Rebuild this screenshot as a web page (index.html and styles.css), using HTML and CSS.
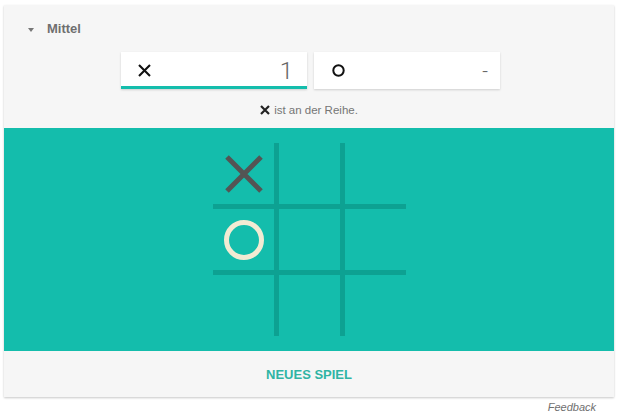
FILE: index.html
```html
<!DOCTYPE html>
<html lang="de">
<head>
<meta charset="utf-8">
<title>Tic Tac Toe</title>
<link rel="stylesheet" href="styles.css">
</head>
<body>
<div class="card">
  <div class="header">
    <span class="caret"></span>
    <span class="level">Mittel</span>
  </div>
  <div class="scores">
    <div class="score active">
      <svg class="mark-sm" width="13" height="13" viewBox="0 0 13 13"><path d="M1 1L12 12M12 1L1 12" stroke="#111" stroke-width="2.1" fill="none"/></svg>
      <span class="value">1</span>
    </div>
    <div class="score">
      <svg class="mark-sm" width="13" height="13" viewBox="0 0 13 13"><circle cx="6.5" cy="6.5" r="5.2" stroke="#111" stroke-width="2" fill="none"/></svg>
      <span class="value dash">-</span>
    </div>
  </div>
  <div class="status">
    <svg width="10" height="10" viewBox="0 0 10 10"><path d="M1 1L9 9M9 1L1 9" stroke="#222" stroke-width="2.2" fill="none"/></svg>
    <span>ist an der Reihe.</span>
  </div>
  <div class="board">
    <div class="grid">
      <div class="cell">
        <svg width="40" height="40" viewBox="0 0 40 40"><path d="M3 3L37 37M37 3L3 37" stroke="#545454" stroke-width="5" fill="none"/></svg>
      </div>
      <div class="cell"></div>
      <div class="cell"></div>
      <div class="cell">
        <svg width="42" height="42" viewBox="0 0 42 42"><circle cx="21" cy="21" r="17.5" stroke="#f2ebd3" stroke-width="5" fill="none"/></svg>
      </div>
      <div class="cell"></div>
      <div class="cell"></div>
      <div class="cell"></div>
      <div class="cell"></div>
      <div class="cell"></div>
    </div>
  </div>
  <div class="footer">
    <span class="new-game">NEUES SPIEL</span>
  </div>
</div>
<div class="feedback">Feedback</div>
</body>
</html>
```
FILE: styles.css
```css
html, body {
  margin: 0;
  padding: 0;
  background: #ffffff;
  font-family: "Liberation Sans", Arial, sans-serif;
}

.card {
  margin: 5px 6px 0 4px;
  width: 610px;
  background: #f6f6f6;
  box-shadow: 0 1px 2px rgba(0, 0, 0, 0.22);
}

.header {
  display: flex;
  align-items: center;
  padding: 16px 0 0 24px;
  height: 16px;
}

.caret {
  width: 0;
  height: 0;
  border-left: 3.5px solid transparent;
  border-right: 3.5px solid transparent;
  border-top: 4px solid #777;
  margin-right: 13px;
  margin-top: 1px;
}

.level {
  font-size: 13px;
  font-weight: bold;
  color: #6f6f6f;
  line-height: 16px;
}

.scores {
  display: flex;
  justify-content: center;
  gap: 7px;
  margin-top: 15px;
  padding-left: 3px;
}

.score {
  width: 186px;
  height: 37px;
  box-sizing: border-box;
  background: #ffffff;
  display: flex;
  align-items: center;
  justify-content: space-between;
  padding: 0 14px 0 17px;
  box-shadow: 0 1px 2px rgba(0, 0, 0, 0.16);
}

.score.active {
  border-bottom: 3px solid #14bdac;
  padding-top: 3px;
}

.score:not(.active) {
  padding-left: 18px;
  padding-right: 12px;
}

.value {
  font-family: Roboto, "Liberation Sans", sans-serif;
  font-weight: 300;
  font-size: 24px;
  color: #666666;
  line-height: 28px;
}

.value.dash {
  font-size: 20px;
}

.status {
  display: flex;
  justify-content: center;
  align-items: center;
  gap: 4px;
  margin-top: 13px;
  height: 16px;
  font-size: 11.5px;
  color: #757575;
  margin-bottom: 10px;
}

.board {
  background: #14bdac;
  height: 223px;
  box-sizing: border-box;
  padding-top: 15px;
  display: flex;
  justify-content: center;
  align-items: flex-start;
}

.grid {
  display: grid;
  grid-template-columns: repeat(3, 61px);
  grid-template-rows: repeat(3, 61px);
  gap: 5px;
  background: #0da192;
  margin-left: 1px;
}

.cell {
  background: #14bdac;
  display: flex;
  align-items: center;
  justify-content: center;
}

.footer {
  height: 46px;
  display: flex;
  align-items: center;
  justify-content: center;
}

.new-game {
  font-size: 13px;
  font-weight: bold;
  color: #2fb4a4;
}

.feedback {
  width: 596px;
  text-align: right;
  margin-top: 4px;
  font-size: 11px;
  font-style: italic;
  color: #6f6f6f;
}
```
